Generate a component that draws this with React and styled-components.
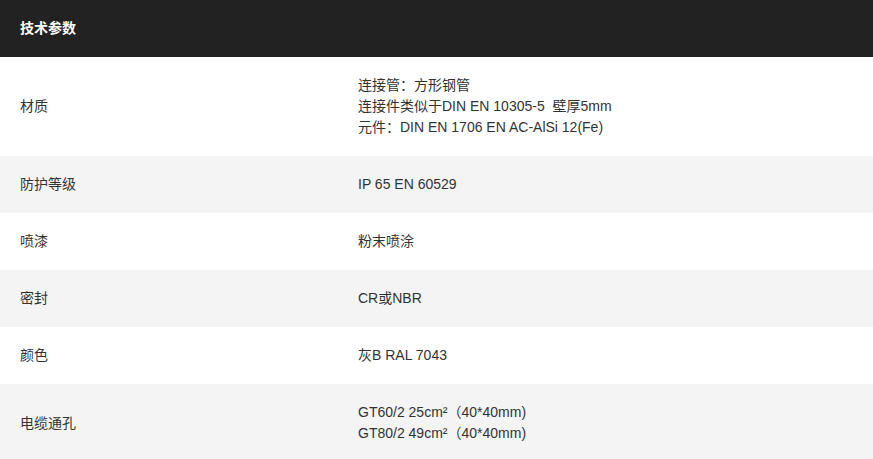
import styled, { createGlobalStyle } from "styled-components";

const GlobalStyle = createGlobalStyle`
  html, body {
    margin: 0;
    padding: 0;
    background: #fff;
  }
  body {
    font-family: "Liberation Sans", Arial, "Noto Sans CJK SC", sans-serif;
    font-size: 14px;
    line-height: 21px;
    color: #333;
  }
`;

const Table = styled.div`
  width: 873px;
`;

const Header = styled.div`
  background: #222;
  color: #fff;
  font-weight: bold;
  padding: 18px 20px;
`;

const Row = styled.div`
  display: grid;
  grid-template-columns: 358px 1fr;
  align-items: center;
  padding: 18px 0;
  background: ${({ $shaded }) => ($shaded ? "#f4f4f4" : "#fff")};
`;

const Label = styled.div`
  padding-left: 20px;
`;

const Value = styled.div`
  white-space: pre-wrap;
`;

const specs = [
  {
    label: "材质",
    lines: [
      "连接管：方形钢管",
      "连接件类似于DIN EN 10305-5  壁厚5mm",
      "元件：DIN EN 1706 EN AC-AlSi 12(Fe)"
    ]
  },
  { label: "防护等级", lines: ["IP 65 EN 60529"] },
  { label: "喷漆", lines: ["粉末喷涂"] },
  { label: "密封", lines: ["CR或NBR"] },
  { label: "颜色", lines: ["灰B RAL 7043"] },
  {
    label: "电缆通孔",
    lines: ["GT60/2 25cm²（40*40mm)", "GT80/2 49cm²（40*40mm)"]
  }
];

const App = () => {
  return (
    <>
      <GlobalStyle />
      <Table>
        <Header>技术参数</Header>
        {specs.map((spec, i) => (
          <Row key={spec.label} $shaded={i % 2 === 1}>
            <Label>{spec.label}</Label>
            <Value>
              {spec.lines.map((line) => (
                <div key={line}>{line}</div>
              ))}
            </Value>
          </Row>
        ))}
      </Table>
    </>
  );
};

export default App;
